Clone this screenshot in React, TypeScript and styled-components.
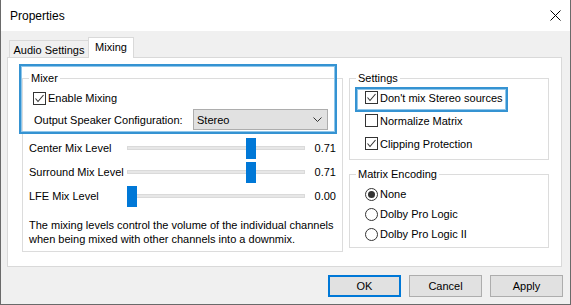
import React from 'react';
import styled, { createGlobalStyle } from 'styled-components';

const GlobalStyle = createGlobalStyle`
  html, body {
    margin: 0;
    padding: 0;
    background: #ffffff;
  }
  body {
    font-family: 'Liberation Sans', Arial, sans-serif;
    font-size: 11px;
    color: #000000;
  }
  * {
    box-sizing: border-box;
  }
`;

const Window = styled.div`
  width: 571px;
  height: 305px;
  display: flex;
  flex-direction: column;
  border-left: 1px solid #6a6a6a;
  border-right: 1px solid #6a6a6a;
  border-bottom: 1px solid #6a6a6a;
  background: #f0f0f0;
`;

const TitleBar = styled.div`
  height: 31px;
  flex-shrink: 0;
  display: flex;
  align-items: center;
  justify-content: space-between;
  padding: 0 9px 0 9px;
  background: #ffffff;
`;

const Title = styled.span`
  font-size: 12px;
`;

const CloseButton = styled.div`
  width: 12px;
  height: 12px;
  display: flex;
  align-items: center;
  justify-content: center;
`;

const Body = styled.div`
  flex: 1;
  display: flex;
  flex-direction: column;
  padding: 6px 8px 0 6px;
`;

const TabStrip = styled.div`
  height: 20px;
  display: flex;
  align-items: flex-end;
  padding-left: 2px;
  position: relative;
  z-index: 1;
`;

const Tab = styled.div<{ $active?: boolean }>`
  display: flex;
  align-items: center;
  justify-content: center;
  border: 1px solid #d9d9d9;
  border-bottom: none;
  ${p => p.$active ? `
    width: 46px;
    height: 21px;
    margin-bottom: -1px;
    background: #ffffff;
    padding-bottom: 3px;
  ` : `
    width: 79px;
    height: 17px;
    border-right: none;
    background: #f0f0f0;
    padding-top: 1px;
  `}
`;

const Panel = styled.div`
  position: relative;
  height: 210px;
  background: #ffffff;
  border: 1px solid #d9d9d9;
  display: grid;
  grid-template-columns: 321px 200px;
  column-gap: 6px;
  align-items: start;
  padding: 20px 0 0 14px;
`;

const GroupBox = styled.div<{ $pad: string }>`
  position: relative;
  border: 1px solid #dcdcdc;
  padding: ${p => p.$pad};
`;

const Caption = styled.span`
  position: absolute;
  top: -7px;
  left: 6px;
  line-height: 13px;
  padding: 0 2px;
  background: #ffffff;
`;

const RightColumn = styled.div`
  display: flex;
  flex-direction: column;
  gap: 14px;
`;

const OptionRow = styled.div<{ $h: number; $indent?: number }>`
  height: ${p => p.$h}px;
  display: flex;
  align-items: center;
  gap: 2px;
  padding-left: ${p => p.$indent ?? 0}px;
`;

const Box = styled.span`
  width: 13px;
  height: 13px;
  flex-shrink: 0;
  border: 1px solid #333333;
  background: #ffffff;
  display: flex;
  align-items: center;
  justify-content: center;
`;

const RadioCircle = styled.span`
  width: 13px;
  height: 13px;
  flex-shrink: 0;
  border: 1px solid #333333;
  border-radius: 50%;
  background: #ffffff;
  display: flex;
  align-items: center;
  justify-content: center;
`;

const RadioDot = styled.span`
  width: 7px;
  height: 7px;
  border-radius: 50%;
  background: #333333;
`;

const SpeakerRow = styled.div`
  margin-top: 1px;
  height: 21px;
  display: flex;
  align-items: center;
  padding-left: 11px;
`;

const SpeakerLabel = styled.span`
  width: 159px;
`;

const Combo = styled.div`
  width: 135px;
  height: 21px;
  display: flex;
  align-items: center;
  justify-content: space-between;
  padding: 0 5px 0 3px;
  background: #e1e1e1;
  border: 1px solid #adadad;
`;

const Sliders = styled.div`
  margin-top: 6px;
  padding-left: 6px;
`;

const SliderRow = styled.div`
  height: 24px;
  display: grid;
  grid-template-columns: 98px 178px 31px;
  align-items: center;
`;

const Track = styled.div`
  position: relative;
  height: 24px;
  display: flex;
  align-items: center;
`;

const TrackLine = styled.div`
  width: 100%;
  height: 4px;
  background: #e7e7e7;
  border: 1px solid #dadada;
`;

const Thumb = styled.div`
  position: absolute;
  top: 2px;
  width: 10px;
  height: 21px;
  background: #0078d7;
`;

const Value = styled.span`
  text-align: right;
`;

const Description = styled.p`
  margin: 10px 0 0 0;
  padding-left: 6px;
  line-height: 14px;
`;

const Highlight = styled.div<{ $l: number; $t: number; $w: number; $h: number }>`
  position: absolute;
  left: ${p => p.$l}px;
  top: ${p => p.$t}px;
  width: ${p => p.$w}px;
  height: ${p => p.$h}px;
  border: 2px solid #3593d2;
  box-shadow: inset 0 0 0 1px #8fc6ea;
  pointer-events: none;
`;

const ButtonRow = styled.div`
  display: flex;
  justify-content: flex-end;
  gap: 8px;
  margin: 8px -1px 0 0;
`;

const Button = styled.div<{ $primary?: boolean }>`
  width: 73px;
  height: 22px;
  display: flex;
  align-items: center;
  justify-content: center;
  background: #e1e1e1;
  border: ${p => p.$primary ? '2px solid #0078d7' : '1px solid #adadad'};
`;

const CheckMark = () => (
  <svg width="11" height="11" viewBox="0 0 11 11">
    <polyline points="1.5,5.5 4,8.5 9.5,2" fill="none" stroke="#333333" strokeWidth="1.1" />
  </svg>
);

const CheckBox: React.FC<{ checked?: boolean }> = ({ checked }) => (
  <Box>{checked && <CheckMark />}</Box>
);

const Radio: React.FC<{ checked?: boolean }> = ({ checked }) => (
  <RadioCircle>{checked && <RadioDot />}</RadioCircle>
);

const sliders = [
  { label: 'Center Mix Level', value: 0.71 },
  { label: 'Surround Mix Level', value: 0.71 },
  { label: 'LFE Mix Level', value: 0 },
];

const settings = [
  { label: "Don't mix Stereo sources", checked: true },
  { label: 'Normalize Matrix', checked: false },
  { label: 'Clipping Protection', checked: true },
];

const encodings = ['None', 'Dolby Pro Logic', 'Dolby Pro Logic II'];

const App: React.FC = () => {
  return (
    <>
      <GlobalStyle />
      <Window>
        <TitleBar>
          <Title>Properties</Title>
          <CloseButton>
            <svg width="11" height="11" viewBox="0 0 11 11">
              <path d="M0.5 0.5 L10.5 10.5 M10.5 0.5 L0.5 10.5" stroke="#000000" strokeWidth="1" />
            </svg>
          </CloseButton>
        </TitleBar>

        <Body>
          <TabStrip>
            <Tab>Audio Settings</Tab>
            <Tab $active>Mixing</Tab>
          </TabStrip>

          <Panel>
            <GroupBox $pad="9px 0 5px 0">
              <Caption>Mixer</Caption>
              <OptionRow $h={20} $indent={10}>
                <CheckBox checked />
                <span>Enable Mixing</span>
              </OptionRow>
              <SpeakerRow>
                <SpeakerLabel>Output Speaker Configuration:</SpeakerLabel>
                <Combo>
                  <span>Stereo</span>
                  <svg width="9" height="6" viewBox="0 0 9 6">
                    <polyline points="0.5,0.5 4.5,4.5 8.5,0.5" fill="none" stroke="#333333" strokeWidth="1" />
                  </svg>
                </Combo>
              </SpeakerRow>
              <Sliders>
                {sliders.map(s => (
                  <SliderRow key={s.label}>
                    <span>{s.label}</span>
                    <Track>
                      <TrackLine />
                      <Thumb style={{ left: Math.round(s.value * 168) }} />
                    </Track>
                    <Value>{s.value.toFixed(2)}</Value>
                  </SliderRow>
                ))}
              </Sliders>
              <Description>
                The mixing levels control the volume of the individual channels
                <br />
                when being mixed with other channels into a downmix.
              </Description>
            </GroupBox>

            <RightColumn>
              <GroupBox $pad="7px 0 4px 15px">
                <Caption>Settings</Caption>
                {settings.map(s => (
                  <OptionRow key={s.label} $h={23}>
                    <CheckBox checked={s.checked} />
                    <span>{s.label}</span>
                  </OptionRow>
                ))}
              </GroupBox>
              <GroupBox $pad="9px 0 3px 15px">
                <Caption>Matrix Encoding</Caption>
                {encodings.map((e, i) => (
                  <OptionRow key={e} $h={20}>
                    <Radio checked={i === 0} />
                    <span>{e}</span>
                  </OptionRow>
                ))}
              </GroupBox>
            </RightColumn>

            <Highlight $l={11} $t={6} $w={318} $h={70} />
            <Highlight $l={347} $t={29} $w={153} $h={25} />
          </Panel>

          <ButtonRow>
            <Button $primary>OK</Button>
            <Button>Cancel</Button>
            <Button>Apply</Button>
          </ButtonRow>
        </Body>
      </Window>
    </>
  );
};

export default App;
